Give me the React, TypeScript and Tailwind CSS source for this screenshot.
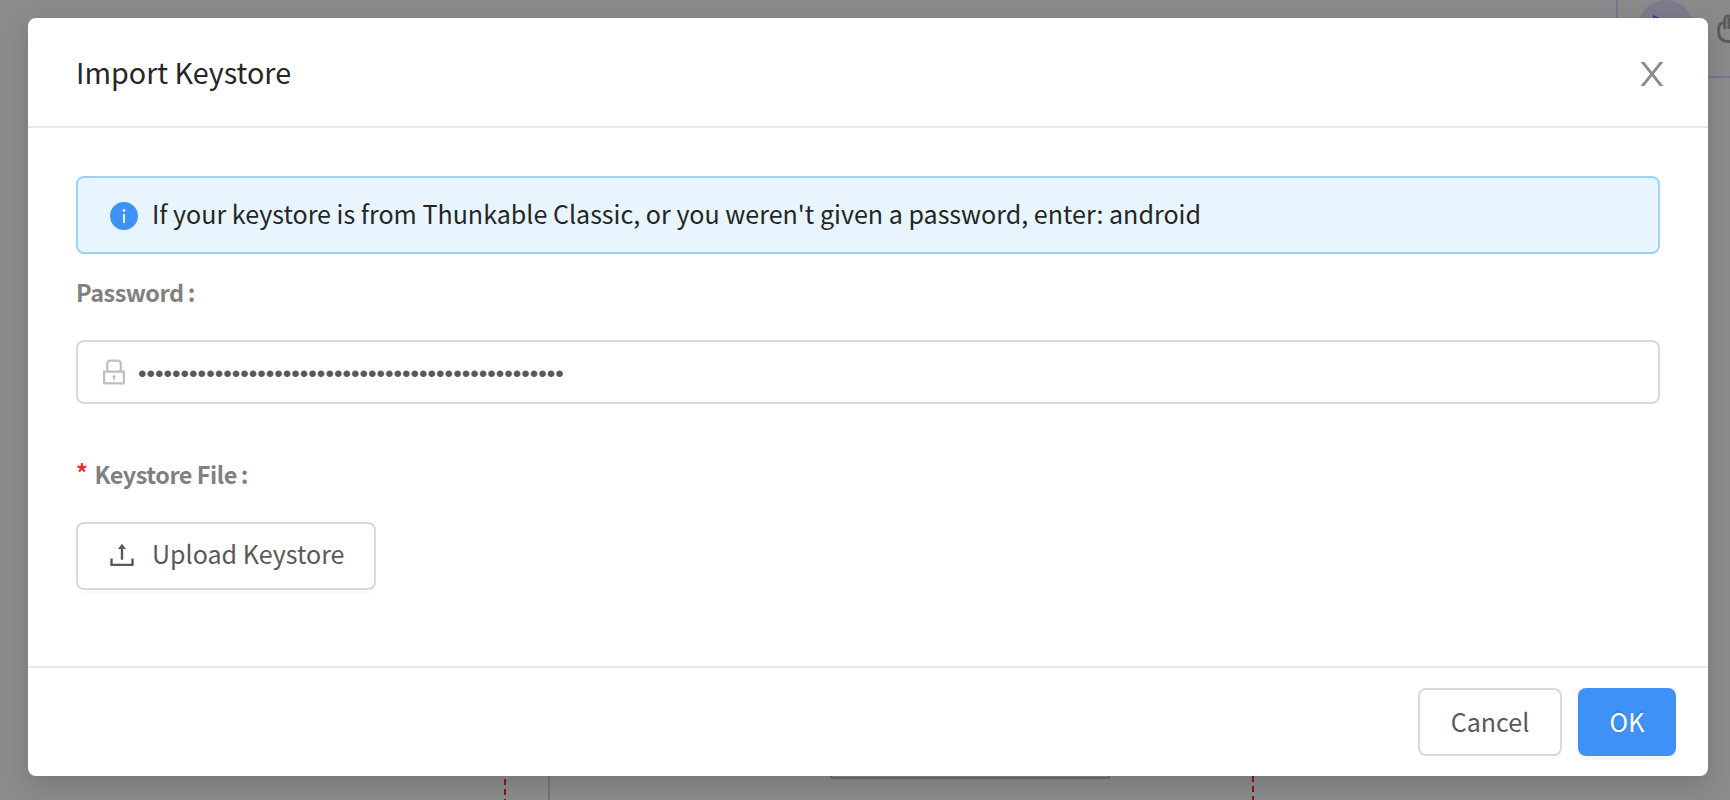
import { AiFillInfoCircle, AiOutlineLock, AiOutlineUpload } from "react-icons/ai";

const DOTS = "•".repeat(50);

function CloseIcon() {
  return (
    <svg width="36" height="38" viewBox="0 0 1024 1024" preserveAspectRatio="none" fill="currentColor">
      <path d="M563.8 512l262.5-312.9c4.4-5.2.7-13.1-6.1-13.1h-79.8c-4.7 0-9.2 2.1-12.3 5.7L511.6 449.8 295.1 191.7c-3-3.6-7.5-5.7-12.3-5.7H203c-6.8 0-10.5 7.9-6.1 13.1L459.4 512 196.9 824.9A7.95 7.95 0 0 0 203 838h79.8c4.7 0 9.2-2.1 12.3-5.7l216.5-258.1 216.5 258.1c3 3.6 7.5 5.7 12.3 5.7h79.8c6.8 0 10.5-7.9 6.1-13.1L563.8 512z" />
    </svg>
  );
}

function Backdrop() {
  return (
    <svg className="absolute inset-0" width="1730" height="800" viewBox="0 0 1730 800" fill="none">
      <rect width="1730" height="800" fill="#8a8b8d" />
      <path d="M1618 0H1730V76H1618Z" fill="#8b8a8a" />
      <path d="M1617 0V77H1730" stroke="#737786" strokeWidth="2" />
      <circle cx="1666" cy="28" r="28" fill="#7c7b8d" />
      <path d="M1653 15L1676 25L1653 41Z" fill="#27429c" />
      <path
        d="M1731 16.5C1726 15 1724.8 17 1724.8 20V29M1724.8 23.5C1721 22 1718.7 25 1718.7 28V33C1718.7 38 1723 41.5 1727 41.5H1732M1729 18V29"
        stroke="#5b5b5b"
        strokeWidth="3"
      />
      <rect x="505" y="700" width="748" height="100" fill="#8b8b8b" />
      <path d="M505 779V800M1253 776V800" stroke="#8a1a12" strokeWidth="2" strokeDasharray="6 4" />
      <path d="M549 700V800" stroke="#747474" strokeWidth="2" />
      <path d="M831 700V778H1109V700" stroke="#6e6e6e" strokeWidth="2" />
    </svg>
  );
}

export default function App() {
  return (
    <div className="relative h-[800px] w-[1730px] overflow-hidden font-['Noto_Sans_CJK_SC',sans-serif]">
      <Backdrop />
      <div
        role="dialog"
        className="absolute top-[18px] left-7 flex h-[758px] w-[1680px] flex-col rounded-lg bg-white shadow-[0_8px_24px_rgba(0,0,0,0.15)]"
      >
        <header className="flex h-[110px] shrink-0 items-center justify-between border-b-2 border-[#e8e8e8] pr-[38px] pl-12">
          <h1 className="text-[28.7px] leading-[44px] text-[#262626]">Import Keystore</h1>
          <button aria-label="Close" className="pt-1 text-[#8c8c8c]">
            <CloseIcon />
          </button>
        </header>

        <main className="flex flex-1 flex-col items-start px-12 pt-12">
          <div className="flex h-[78px] w-full items-center rounded-lg border-2 border-[#9bd4fb] bg-[#e8f5fe] pl-[30px]">
            <AiFillInfoCircle size={32} color="#3f91f7" className="mt-0.5 shrink-0" />
            <span className="ml-3 pb-[5px] text-[25.07px] leading-[42px] whitespace-nowrap text-[#262626]">
              If your keystore is from Thunkable Classic, or you weren't given a password, enter: android
            </span>
          </div>

          <label className="mt-[17px] text-[23.4px] leading-[42px] font-bold tracking-[-0.45px] text-[#808080]">
            Password<span className="ml-1">:</span>
          </label>
          <div className="mt-[27px] flex h-16 w-full items-center rounded-lg border-2 border-[#d9d9d9] pl-5">
            <AiOutlineLock size={32} color="#bfbfbf" />
            <span className="ml-2 pt-1 font-['Liberation_Sans',sans-serif] text-[24.33px] leading-none text-[#595959]">
              {DOTS}
            </span>
          </div>

          <label className="mt-[49px] flex text-[23.4px] leading-[42px] font-bold tracking-[-0.45px] text-[#808080]">
            <span className="mr-[7px] -mt-0.5 text-[#e5302f]">*</span>
            Keystore File<span className="ml-1">:</span>
          </label>
          <button className="mt-[27px] flex h-[68px] w-[300px] items-center rounded-lg border-2 border-[#d9d9d9] pl-7 text-[25.05px] text-[#595959] shadow-[0_4px_0_rgba(0,0,0,0.015)]">
            <AiOutlineUpload size={32} className="mb-[3px]" />
            <span className="ml-3.5 pb-1 whitespace-nowrap">Upload Keystore</span>
          </button>
        </main>

        <footer className="flex h-[110px] shrink-0 items-start justify-end gap-4 border-t-2 border-[#e8e8e8] pt-5 pr-8 text-[25.05px]">
          <button className="h-[68px] w-36 rounded-lg border-2 border-[#d9d9d9] text-[#595959] shadow-[0_4px_0_rgba(0,0,0,0.015)]">
            Cancel
          </button>
          <button className="h-[68px] w-[98px] rounded-lg bg-[#3f91f7] text-white shadow-[0_4px_0_rgba(0,0,0,0.045)] text-shadow-[0_-2px_0_rgba(0,0,0,0.12)]">
            OK
          </button>
        </footer>
      </div>
    </div>
  );
}
